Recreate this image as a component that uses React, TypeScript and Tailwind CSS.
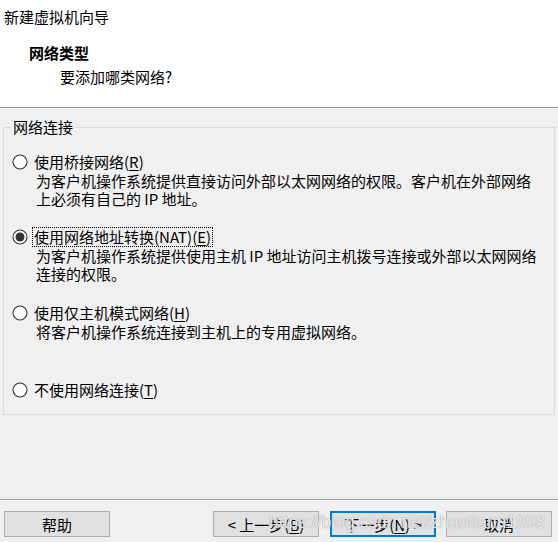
import React from 'react';

const font = '[font-family:"Noto_Sans_CJK_SC","Microsoft_YaHei",sans-serif]';

function Radio({ checked }: { checked?: boolean }) {
  return (
    <svg width="16" height="16" viewBox="0 0 16 16" className="shrink-0">
      <circle cx="8" cy="8" r="7" fill="#ffffff" stroke="#333333" strokeWidth="1.1" />
      {checked && <circle cx="8" cy="8" r="4.5" fill="#333333" />}
    </svg>
  );
}

function Key({ k }: { k: string }) {
  return (
    <>
      (<span className="underline underline-offset-2">{k}</span>)
    </>
  );
}

function Option({
  label,
  mnemonic,
  checked,
  focused,
  lines,
}: {
  label: string;
  mnemonic: string;
  checked?: boolean;
  focused?: boolean;
  lines?: string[];
}) {
  return (
    <div className="flex flex-col">
      <div className="flex items-center h-[20px] pl-[8px] gap-[5px]">
        <Radio checked={checked} />
        <span
          className={
            'leading-[18px] whitespace-nowrap px-[1px] ' +
            (focused ? 'outline outline-1 outline-dotted outline-black' : '')
          }
        >
          {label}
          <Key k={mnemonic} />
        </span>
      </div>
      {lines && (
        <div className="pl-[32px] leading-[18px]">
          {lines.map((l) => (
            <div key={l} className="whitespace-nowrap">
              {l}
            </div>
          ))}
        </div>
      )}
    </div>
  );
}

function Button({
  children,
  primary,
}: {
  children: React.ReactNode;
  primary?: boolean;
}) {
  return (
    <button
      className={
        'w-[106px] h-[26px] flex items-center justify-center bg-[#e1e1e1] text-black text-[15px] leading-none whitespace-pre ' +
        (primary ? 'border-2 border-[#0078d7]' : 'border border-[#adadad]')
      }
    >
      {children}
    </button>
  );
}

export default function App() {
  return (
    <div
      className={`relative w-[558px] h-[542px] flex flex-col bg-[#f0f0f0] text-black text-[15px] overflow-hidden ${font}`}
    >
      {/* Header */}
      <div className="h-[108px] shrink-0 bg-white border-b border-[#a0a0a0] flex flex-col">
        <div className="pl-[4px] pt-[7px] leading-[20px]">新建虚拟机向导</div>
        <div className="pl-[29px] pt-[16px] leading-[20px] font-bold">网络类型</div>
        <div className="pl-[60px] pt-[4px] leading-[20px]">要添加哪类网络?</div>
      </div>

      {/* Body */}
      <div className="flex-1 pt-[9px]">
        <fieldset className="mx-[3px] border border-[#dcdcdc] pb-[14px]">
          <legend className="ml-[7px] px-[2px] leading-[20px]">网络连接</legend>
          <div className="flex flex-col pt-[15px]">
            <Option
              label="使用桥接网络"
              mnemonic="R"
              lines={[
                '为客户机操作系统提供直接访问外部以太网网络的权限。客户机在外部网络',
                '上必须有自己的 IP 地址。',
              ]}
            />
            <div className="h-[19px]" />
            <Option
              label="使用网络地址转换(NAT)"
              mnemonic="E"
              checked
              focused
              lines={[
                '为客户机操作系统提供使用主机 IP 地址访问主机拨号连接或外部以太网网络',
                '连接的权限。',
              ]}
            />
            <div className="h-[20px]" />
            <Option
              label="使用仅主机模式网络"
              mnemonic="H"
              lines={['将客户机操作系统连接到主机上的专用虚拟网络。']}
            />
            <div className="h-[39px]" />
            <Option label="不使用网络连接" mnemonic="T" />
          </div>
        </fieldset>
      </div>

      {/* Footer */}
      <div className="h-[43px] shrink-0 border-t border-[#a0a0a0] flex flex-col">
        <div className="h-px bg-white" />
        <div className="flex items-start pt-[10px] pl-[4px] pr-[6px]">
          <Button>帮助</Button>
          <div className="flex-1" />
          <Button>
            {'< '}上一步<Key k="B" />
          </Button>
          <div className="w-[11px]" />
          <Button primary>
            下一步<Key k="N" />{' >'}
          </Button>
          <div className="w-[10px]" />
          <Button>取消</Button>
        </div>
      </div>

      {/* Watermark */}
      <div className="absolute left-[269px] top-[511px] text-[17.5px] leading-[22px] whitespace-nowrap text-white/80 [font-family:'Liberation_Sans',Arial,sans-serif] [text-shadow:0_0_1px_#7a7a7a] pointer-events-none">
        https://blog.csdn.net/zhaotiann1998
      </div>
    </div>
  );
}
